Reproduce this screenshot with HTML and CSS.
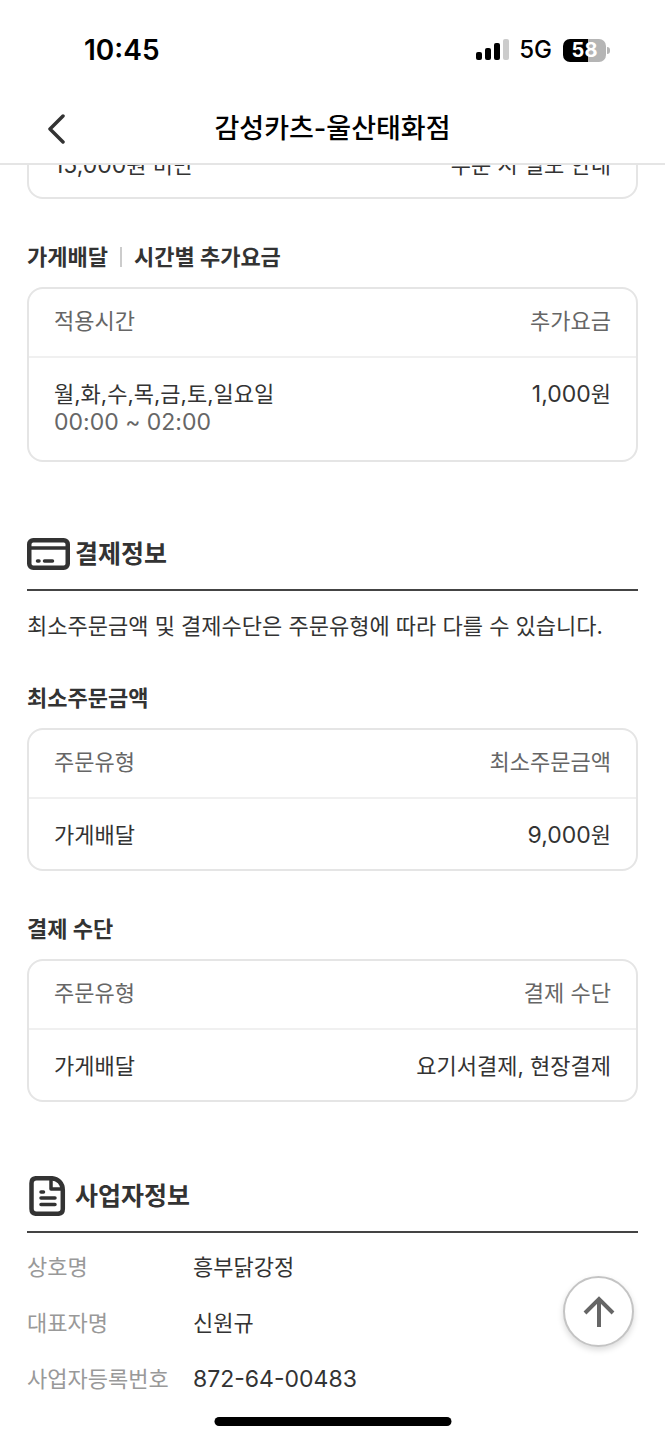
FILE: index.html
```html
<!DOCTYPE html>
<html lang="ko">
<head>
<meta charset="UTF-8">
<meta name="viewport" content="width=device-width, initial-scale=1">
<title>감성카츠-울산태화점</title>
<link rel="stylesheet" href="styles.css">
</head>
<body>
<header class="top">
	<div class="status">
		<span class="time">10:45</span>
		<div class="statusRight">
			<svg class="signal" width="33" height="22" viewBox="0 0 33 22">
				<rect x="0" y="13" width="6" height="8" rx="2"/>
				<rect x="9" y="9" width="6" height="12" rx="2"/>
				<rect x="18" y="4" width="6" height="17" rx="2"/>
				<rect x="27" y="0" width="6" height="21" rx="2" fill="#cccccc"/>
			</svg>
			<span class="network">5G</span>
			<span class="battery">58</span>
		</div>
	</div>
	<nav class="titleBar">
		<button type="button" class="back" aria-label="뒤로">
			<svg width="18" height="30" viewBox="0 0 18 30" fill="none" stroke="#333333" stroke-width="3.5" stroke-linecap="round" stroke-linejoin="round">
				<path d="M15 2L2 15l13 13"/>
			</svg>
		</button>
		<h1>감성카츠-울산태화점</h1>
	</nav>
</header>

<main>
	<table class="card cut">
		<tbody>
			<tr><td><span class="num">15,000</span>원 미만</td><td>주문 시 별도 안내</td></tr>
		</tbody>
	</table>

	<h3>가게배달<span class="bar"></span>시간별 추가요금</h3>
	<table class="card">
		<thead>
			<tr><th>적용시간</th><th>추가요금</th></tr>
		</thead>
		<tbody>
			<tr class="tall">
				<td>월,화,수,목,금,토,일요일<br><span class="num hours">00:00 ~ 02:00</span></td>
				<td><span class="num">1,000</span>원</td>
			</tr>
		</tbody>
	</table>

	<!-- 결제정보 -->
	<section>
		<h2>
			<svg width="43" height="40" viewBox="0 0 43 40" fill="none" stroke="#333333" stroke-linecap="round">
				<rect x="2.25" y="6.25" width="38.5" height="27.5" rx="4" stroke-width="4.5"/>
				<path d="M3 14h37" stroke-width="3.5"/>
				<path d="M10.5 27h1.5M17.5 27h8" stroke-width="3.5"/>
			</svg>
			결제정보
		</h2>
		<p class="desc">최소주문금액 및 결제수단은 주문유형에 따라 다를 수 있습니다.</p>

		<h3>최소주문금액</h3>
		<table class="card">
			<thead>
				<tr><th>주문유형</th><th>최소주문금액</th></tr>
			</thead>
			<tbody>
				<tr><td>가게배달</td><td><span class="num">9,000</span>원</td></tr>
			</tbody>
		</table>

		<h3>결제 수단</h3>
		<table class="card">
			<thead>
				<tr><th>주문유형</th><th>결제 수단</th></tr>
			</thead>
			<tbody>
				<tr><td>가게배달</td><td>요기서결제, 현장결제</td></tr>
			</tbody>
		</table>
	</section>

	<!-- 사업자정보 -->
	<section>
		<h2>
			<svg width="43" height="40" viewBox="0 0 43 40" fill="none" stroke="#333333" stroke-linecap="round" stroke-linejoin="round">
				<path d="M9.5 2.2h14.5c7 0 11.8 5 11.8 12v18.6c0 3.500-1.500 5-5 5H9.500c-3.500 0-5-1.500-5-5V7.200c0-3.500 1.500-5 5-5z" stroke-width="4.500"/>
				<path d="M24 3v10h11" stroke-width="3.500"/>
				<path d="M14 16h2.500M14 22h14M14 28.500h14" stroke-width="3.500"/>
			</svg>
			사업자정보
		</h2>
		<dl class="info">
			<dt>상호명</dt><dd>흥부닭강정</dd>
			<dt>대표자명</dt><dd>신원규</dd>
			<dt>사업자등록번호</dt><dd class="num">872-64-00483</dd>
		</dl>
	</section>
</main>

<button type="button" class="goTop" aria-label="맨 위로">
	<svg width="32" height="32" viewBox="0 0 32 32" fill="none" stroke="#666666" stroke-width="4">
		<path d="M16 31V3M2 17L16 3l14 14"/>
	</svg>
</button>
<div class="homeBar"></div>
</body>
</html>
```
FILE: styles.css
```css
* {
	margin: 0;
	padding: 0;
	box-sizing: border-box;
}

body {
	background: #ffffff;
	color: #333333;
	font-family: "Inter", "Noto Sans CJK KR", sans-serif;
	font-size: 22px;
	line-height: 28px;
}

button {
	border: none;
	background: none;
	cursor: pointer;
}

svg {
	display: block;
}

/* 상단 */
.top {
	position: sticky;
	top: 0;
	z-index: 2;
	background: #ffffff;
	border-bottom: 2px solid #e5e5e5;
	color: #000000;
}

.status {
	display: flex;
	justify-content: space-between;
	align-items: center;
	height: 94px;
	padding: 6px 59px 0 84px;
}

.time {
	font-size: 28px;
	font-weight: 600;
}

.statusRight {
	display: flex;
	align-items: center;
}

.network {
	margin: 0 11px 0 10px;
	font-size: 24px;
	font-weight: 500;
}

.battery {
	position: relative;
	width: 43px;
	height: 23px;
	border-radius: 7px;
	background: linear-gradient(to right, #000000 58%, #b5b5b5 58%);
	color: #ffffff;
	font-size: 20px;
	font-weight: 700;
	line-height: 23px;
	text-align: center;
}

.battery::after {
	content: "";
	position: absolute;
	top: 8px;
	right: -4px;
	width: 3px;
	height: 7px;
	border-radius: 0 3px 3px 0;
	background: #b5b5b5;
}

.titleBar {
	display: grid;
	grid-template-columns: 66px 1fr 66px;
	align-items: center;
	height: 69px;
}

.back {
	justify-self: end;
}

h1 {
	font-size: 27px;
	font-weight: 500;
	text-align: center;
}

/* 본문 */
main {
	padding: 0 27px 47px;
}

section {
	margin-top: 72px;
}

section + section {
	margin-top: 74px;
}

h2 {
	display: flex;
	align-items: center;
	gap: 5px;
	padding-bottom: 15px;
	border-bottom: 2px solid #444444;
	font-size: 25px;
	line-height: 40px;
}

h3 {
	display: flex;
	align-items: center;
	margin: 44px 0 16px;
	font-size: 22px;
}

.bar {
	width: 2px;
	height: 20px;
	margin: 0 12px;
	background: #cccccc;
}

.desc {
	margin-top: 21px;
}

.card {
	width: 100%;
	border: 2px solid #e5e5e5;
	border-radius: 16px;
	border-spacing: 0;
}

.card th, .card td {
	padding: 22px 25px 20px;
	font-weight: 400;
	text-align: left;
	vertical-align: top;
}

.card th {
	padding: 18px 25px 21px;
	border-bottom: 2px solid #f0f0f0;
	color: #666666;
}

.card th:last-child, .card td:last-child {
	text-align: right;
}

.card .tall td {
	padding-bottom: 24px;
}

.card.cut {
	margin-top: -40px;
}

.card.cut td {
	padding: 24px 25px 18px;
}

.num {
	font-size: 23px;
}

.hours {
	color: #666666;
}

.info {
	display: grid;
	grid-template-columns: 166px 1fr;
	row-gap: 28px;
	margin-top: 20px;
}

.info dt {
	color: #999999;
}

/* 화면 위에 떠있는 요소 */
.goTop {
	position: fixed;
	right: 31px;
	bottom: 93px;
	display: flex;
	justify-content: center;
	align-items: center;
	width: 71px;
	height: 71px;
	border: 2px solid #c4c4c4;
	border-radius: 50%;
	background: #ffffff;
	box-shadow: 0 3px 6px rgba(0, 0, 0, 0.15);
}

.homeBar {
	position: fixed;
	left: 50%;
	bottom: 14px;
	width: 237px;
	height: 9px;
	border-radius: 5px;
	background: #000000;
	transform: translateX(-50%);
}
```
